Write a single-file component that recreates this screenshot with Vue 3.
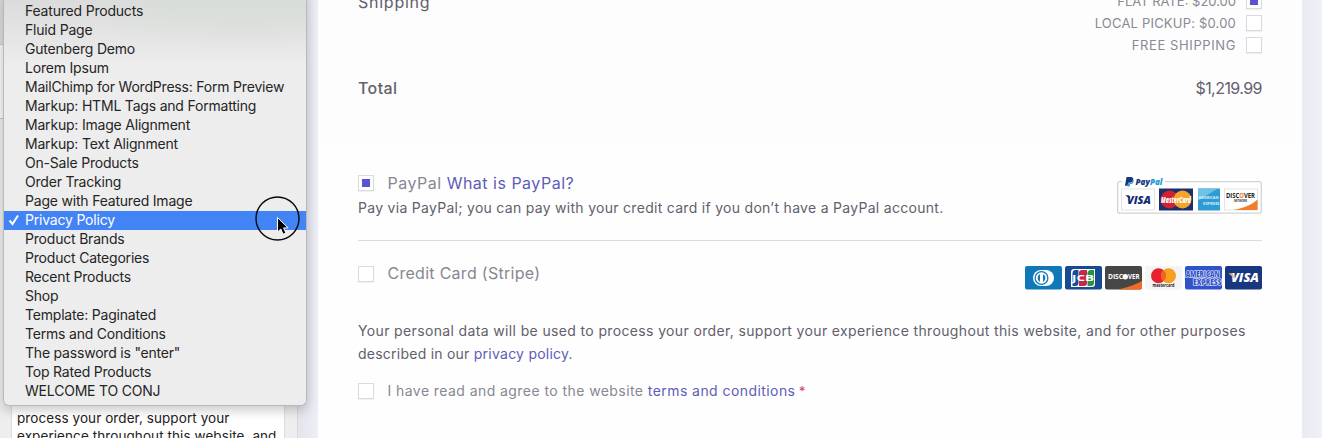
<script setup>
const pages = [
  'Featured Products', 'Fluid Page', 'Gutenberg Demo', 'Lorem Ipsum',
  'MailChimp for WordPress: Form Preview', 'Markup: HTML Tags and Formatting',
  'Markup: Image Alignment', 'Markup: Text Alignment', 'On-Sale Products',
  'Order Tracking', 'Page with Featured Image', 'Privacy Policy',
  'Product Brands', 'Product Categories', 'Recent Products', 'Shop',
  'Template: Paginated', 'Terms and Conditions', 'The password is "enter"',
  'Top Rated Products', 'WELCOME TO CONJ',
]
const selected = 'Privacy Policy'
const rates = [
  { label: 'FLAT RATE: $20.00', on: true, cls: 'r1' },
  { label: 'LOCAL PICKUP: $0.00', on: false, cls: 'r2' },
  { label: 'FREE SHIPPING', on: false, cls: 'r3' },
]
</script>

<template>
  <div class="screen">
    <aside class="sidebar">
      <div class="strip"></div>
      <div class="policy-box">process your order, support your<br />experience throughout this website, and</div>
    </aside>

    <main class="preview">
      <div class="checkout">
        <section class="totals">
          <div class="shipping">
            <span class="ship-label">Shipping</span>
            <ul class="rates">
              <li v-for="r in rates" :key="r.label">
                <span :class="r.cls">{{ r.label }}</span><i class="box" :class="{ on: r.on }"></i>
              </li>
            </ul>
          </div>
          <div class="total">
            <span class="total-label">Total</span><span class="amount">$1,219.99</span>
          </div>
        </section>

        <section class="payment">
          <div class="method first">
            <div class="method-text">
              <div class="choice">
                <i class="box on"></i><span class="name pp">PayPal <a>What is PayPal?</a></span>
              </div>
              <p class="desc">Pay via PayPal; you can pay with your credit card if you don’t have a PayPal account.</p>
            </div>
            <svg class="pp-cards" width="146" height="40" viewBox="0 0 146 40">
              <rect x="1.700" y="5.700" width="143.600" height="31.500" rx="2" fill="#fff" stroke="#d3d3d3" stroke-width="1.300" />
              <rect x="6" y="0" width="43" height="12" fill="#fff" />
              <path d="M10.500 1h4.200c2.200 0 3 1.400 2.500 3.100-.5 2-2 2.700-3.600 2.700h-1.400l-.6 3H9z" fill="#17377d" />
              <path d="M16.800 3.300c1.200.8 1 2.400.3 3.400-.8 1.100-1.700 1.200-3.100 1.200l-.5 2.600h-2.200l.8-3.200h1.500c2 0 3.200-1.500 3.200-4z" fill="#1f9bd7" />
              <text x="19.500" y="8.500" class="logo paypal" textLength="27" lengthAdjust="spacingAndGlyphs"><tspan fill="#17377d">Pay</tspan><tspan fill="#1f9bd7">Pal</tspan></text>
              <rect x="5.500" y="13" width="33" height="21" fill="#fff" stroke="#ddd" stroke-width=".8" />
              <path d="M9.300 19.300h3.800l1 4z" fill="#17377d" />
              <text x="11" y="27.500" class="logo" font-size="11" fill="#172c75" textLength="24" lengthAdjust="spacingAndGlyphs">VISA</text>
              <rect x="43" y="12.500" width="34" height="22" fill="#1b2f6d" />
              <circle cx="53.500" cy="23.500" r="9" fill="#d1202f" /><circle cx="66.500" cy="23.500" r="9" fill="#f4a52c" />
              <text x="45" y="26.500" class="logo" font-size="8" fill="#fff" textLength="30" lengthAdjust="spacingAndGlyphs">MasterCard</text>
              <rect x="82" y="12.500" width="22" height="22" fill="#2e9bd4" />
              <path d="M82 12.500h20l-20 12z" fill="#6fc2e6" />
              <text x="82.500" y="23.300" class="logo up" font-size="4.200" fill="#d9f0fa" textLength="20" lengthAdjust="spacingAndGlyphs">AMERICAN</text>
              <text x="87" y="28.700" class="logo up" font-size="4.200" fill="#d9f0fa" textLength="16.500" lengthAdjust="spacingAndGlyphs">EXPRESS</text>
              <rect x="108.500" y="13" width="33" height="21" fill="#fff" stroke="#ddd" stroke-width=".8" />
              <path d="M141.500 23.500v10.500h-24c10-2 18-5 24-10.500z" fill="#ef7d2c" />
              <text x="110" y="22.300" class="logo up" font-size="6.500" fill="#222" textLength="29" lengthAdjust="spacingAndGlyphs">DISC<tspan fill="#ef7d2c">O</tspan>VER</text>
              <text x="118" y="26.300" class="logo up" font-size="2.800" fill="#444" textLength="13">NETWORK</text>
            </svg>
          </div>

          <div class="method second">
            <div class="choice">
              <i class="box"></i><span class="name cc">Credit Card (Stripe)</span>
            </div>
            <div class="cards">
              <svg viewBox="0 0 37 24"><rect width="37" height="23.500" rx="2" fill="#0f78b8" />
                <rect x="8" y="4" width="21" height="16" rx="8" fill="#fff" />
                <circle cx="16.500" cy="12" r="7" fill="#1779b6" /><circle cx="16.500" cy="12" r="5.700" fill="#fff" />
                <path d="M15 8a4.500 4.500 0 0 0 0 8zM18 8a4.500 4.500 0 0 1 0 8z" fill="#1779b6" />
              </svg>
              <svg viewBox="0 0 37 24"><rect width="37" height="23.500" rx="2" fill="#164a91" />
                <path d="M9 3h21v15q0 3-3 3H6V6q0-3 3-3z" fill="#fff" />
                <path d="M9.500 4h4v13q0 3-3 3H7.500V7q0-2 2-3z" fill="#16509b" />
                <path d="M17 4h5v13q0 3-3 3h-5V7q0-3 3-3z" fill="#c42845" />
                <path d="M24.500 4H29v13q0 3-3 3h-3.500V6z" fill="#269445" />
                <text x="7" y="15" class="logo up" font-size="8.500" fill="#fff" textLength="22" lengthAdjust="spacingAndGlyphs">JCB</text>
              </svg>
              <svg viewBox="0 0 37 24"><rect width="37" height="23.500" rx="2" fill="#464646" />
                <path d="M37 15v6.500q0 2-2 2H13c10-2 18-5 24-8.500z" fill="#f26a28" />
                <text x="3" y="13" class="logo up" font-size="6.800" fill="#fff" textLength="15" lengthAdjust="spacingAndGlyphs">DISC</text>
                <circle cx="20.300" cy="10.700" r="2.700" fill="#fff" />
                <text x="23" y="13" class="logo up" font-size="6.800" fill="#fff" textLength="11.500" lengthAdjust="spacingAndGlyphs">VER</text>
              </svg>
              <svg viewBox="0 0 37 24"><rect width="37" height="23.500" rx="2" fill="#f4f4f4" />
                <circle cx="13.500" cy="9.700" r="7.500" fill="#e52330" /><circle cx="23.500" cy="9.700" r="7.500" fill="#f5a01e" />
                <path d="M18.500 4.100a7.500 7.500 0 0 1 0 11.200a7.500 7.500 0 0 1 0-11.200z" fill="#f26322" />
                <text x="7.500" y="21.300" class="logo up" font-size="4.300" fill="#222" textLength="22" lengthAdjust="spacingAndGlyphs">mastercard</text>
              </svg>
              <svg viewBox="0 0 37 24"><rect width="37" height="23.500" rx="2" fill="#3152c9" />
                <text x=".7" y="10.500" class="logo amex" textLength="34" lengthAdjust="spacingAndGlyphs">AMERICAN</text>
                <text x="8" y="18.500" class="logo amex" textLength="28.500" lengthAdjust="spacingAndGlyphs">EXPRESS</text>
              </svg>
              <svg viewBox="0 0 37 24"><rect width="37" height="23.500" rx="2" fill="#173780" />
                <text x="6" y="16.300" class="logo" font-size="12.500" fill="#fff" textLength="28" lengthAdjust="spacingAndGlyphs">VISA</text>
                <path d="M3.500 7.200h4.200l1.600 5.300z" fill="#e9b36b" />
              </svg>
            </div>
          </div>

          <p class="privacy"><span class="p1">Your personal data will be used to process your order, support your experience throughout this website, and for other purposes</span><br /><span class="p2">described in our <a>privacy policy</a>.</span></p>
          <div class="choice terms">
            <i class="box"></i><span class="agree">I have read and agree to the website <a>terms and conditions</a> <b>*</b></span>
          </div>
        </section>
      </div>
    </main>

    <ul class="menu">
      <li v-for="p in pages" :key="p" :class="{ active: p === selected }">
        <svg v-if="p === selected" class="check" width="12" height="12" viewBox="0 0 12 12"><path d="M1.500 6.500l3 3.500L10 1.500" fill="none" stroke="#fff" stroke-width="2" /></svg>
        <span>{{ p }}</span>
      </li>
    </ul>

    <svg class="pointer" width="46" height="46" viewBox="0 0 46 46">
      <circle cx="22.500" cy="22.500" r="21.500" fill="none" stroke="#080808" stroke-width="1.400" />
      <path d="M22.500 21.500v14.500l3.300-3 2.300 5.200 2.800-1.200-2.300-5.100h4.500z" fill="#000" stroke="#fff" stroke-width="1" />
    </svg>
  </div>
</template>

<style>
body { margin: 0; }
</style>

<style scoped>
* { box-sizing: border-box; }
ul, p { margin: 0; padding: 0; list-style: none; }
.screen {
  position: relative; display: flex; width: 1322px; height: 438px; overflow: hidden;
  background: #edeef6; font-family: Inter, "Liberation Sans", sans-serif;
}
.sidebar {
  flex: none; width: 298px; height: 438px; background: #eee; border-right: 1px solid #d8d8dd;
  display: flex; flex-direction: column;
}
.strip {
  flex: none; height: 119px; width: 20px; border-bottom: 1px solid #c5c5c5;
  background: linear-gradient(#dcdcdc 0 44px, #c9c9c9 44px 45px, #f8f8f8 45px);
}
.policy-box {
  flex: none; margin: 260px 0 0 11px; width: 274px; height: 80px; padding-top: 29px; padding-left: 5px;
  background: #fff; border: 1px solid #ddd; font-size: 13.500px; line-height: 18px; color: #222;
  white-space: nowrap; letter-spacing: .08px;
}
.preview { flex: 1; padding: 0 20px; background: linear-gradient(90deg, #e4e5ec, #edeef6 20px 1004px, #e9eaf2 1004px, #f0f1f8); }
.checkout { height: 438px; background: #fefefe; color: #62606c; }
.totals { height: 143px; padding: 0 40px; background: #fdfdfd; }
.shipping { display: flex; justify-content: space-between; height: 66px; }
.ship-label { font-size: 16px; line-height: 20px; margin-top: -8px; letter-spacing: .75px; }
.rates { margin-top: -10px; font-size: 13px; color: #8a8994; }
.rates li { display: flex; align-items: center; justify-content: flex-end; gap: 10px; height: 22px; }
.rates span { margin-top: -1px; }
.r2 { letter-spacing: .2px; }
.r3 { letter-spacing: .6px; }
.total { display: flex; justify-content: space-between; align-items: center; height: 44px; font-size: 16px; }
.total-label { font-weight: 500; letter-spacing: .4px; }
.amount { letter-spacing: -.55px; }
.box {
  flex: none; width: 16px; height: 16px; background: #fff; border: 1px solid #d9d9e2;
  box-shadow: 0 1px 1px #0000000d; display: flex; align-items: center; justify-content: center;
}
.box.on::after { content: ""; width: 8px; height: 8px; background: #5753d3; }
.payment { padding: 0 40px; }
.method { display: flex; justify-content: space-between; }
.first { height: 98px; padding-top: 28px; border-bottom: 1px solid #dadae2; }
.choice { display: flex; align-items: center; gap: 13.500px; height: 23px; }
.name { font-size: 16px; color: #888792; white-space: nowrap; }
.pp { letter-spacing: .5px; }
.cc { letter-spacing: .28px; margin-top: -1px; }
a { color: #5f5cb9; }
.desc { font-size: 14px; line-height: 24px; margin-top: 2px; white-space: nowrap; letter-spacing: .29px; }
.pp-cards { margin-top: 5px; flex: none; }
.second { height: 66px; padding-top: 21px; }
.cards { display: flex; gap: 3px; margin-top: 4px; }
.cards svg { width: 37px; height: 24px; }
.logo { font-family: "Open Sans", sans-serif; font-weight: 800; font-style: italic; }
.logo.up { font-style: normal; font-weight: 700; }
.paypal { font-size: 9px; }
.logo.amex { font-size: 8px; font-style: normal; fill: #3152c9; stroke: #fff; stroke-width: 1.200px; paint-order: stroke; }
.privacy { margin-top: 12px; font-size: 14px; line-height: 23px; white-space: nowrap; }
.p1 { letter-spacing: .36px; }
.p2 { letter-spacing: .24px; }
.terms { margin-top: 14px; }
.agree { font-size: 14px; color: #888792; white-space: nowrap; letter-spacing: .43px; }
.agree b { color: #d2506a; font-weight: 500; font-size: 13px; margin-left: -1px; }
.menu {
  position: absolute; left: 3px; top: -8px; width: 304px; height: 414px; padding: 10px 0 0;
  border: 1px solid #b9b9bc; border-top: 0; border-radius: 0 0 6px 6px;
  background: radial-gradient(ellipse 190px 52px at 240px 8px, #d7ded8, #dde2dd00), linear-gradient(#d9d9d9, #ededed 75px);
  box-shadow: 0 4px 12px #00000038; font-size: 14px; color: #252525; letter-spacing: -.2px;
}
.menu li { position: relative; height: 19px; padding: 0 0 0 21px; line-height: 17px; white-space: nowrap; background-clip: padding-box; }
.menu .active { background: linear-gradient(#4284f5, #4284f5) 0 -1px no-repeat; color: #fff; box-shadow: inset 0 0 0 20px #4284f5; }
.check { position: absolute; left: 4px; top: 3px; }
.pointer { position: absolute; left: 255px; top: 196px; }
</style>
